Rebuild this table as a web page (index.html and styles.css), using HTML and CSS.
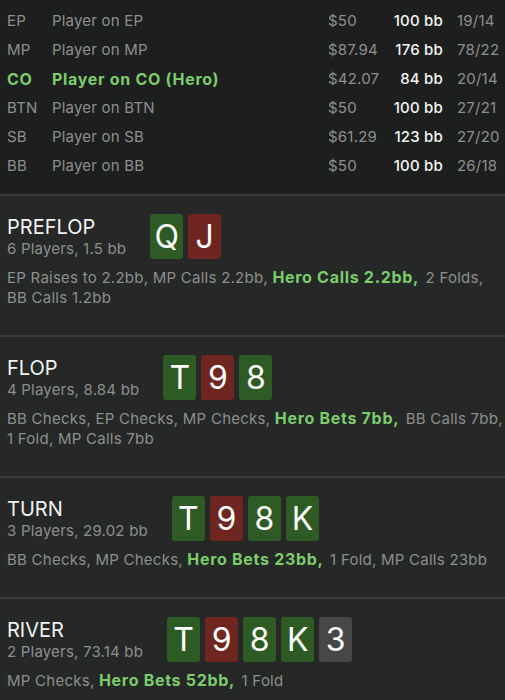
FILE: index.html
```html
<!DOCTYPE html>
<html>
<head>
<meta charset="utf-8">
<link rel="stylesheet" href="styles.css">
</head>
<body>
<div class="players">
  <div class="prow"><span class="pos">EP</span><span class="name">Player on EP</span><span class="money">$50</span><span class="bb">100 bb</span><span class="ratio">19/14</span></div>
  <div class="prow"><span class="pos">MP</span><span class="name">Player on MP</span><span class="money">$87.94</span><span class="bb">176 bb</span><span class="ratio">78/22</span></div>
  <div class="prow hero"><span class="pos">CO</span><span class="name">Player on CO (Hero)</span><span class="money">$42.07</span><span class="bb">84 bb</span><span class="ratio">20/14</span></div>
  <div class="prow"><span class="pos">BTN</span><span class="name">Player on BTN</span><span class="money">$50</span><span class="bb">100 bb</span><span class="ratio">27/21</span></div>
  <div class="prow"><span class="pos">SB</span><span class="name">Player on SB</span><span class="money">$61.29</span><span class="bb">123 bb</span><span class="ratio">27/20</span></div>
  <div class="prow"><span class="pos">BB</span><span class="name">Player on BB</span><span class="money">$50</span><span class="bb">100 bb</span><span class="ratio">26/18</span></div>
</div>

<section class="street">
  <div class="head">
    <div class="info"><div class="title">PREFLOP</div><div class="sub">6 Players, 1.5 bb</div></div>
    <div class="cards"><span class="card g">Q</span><span class="card r">J</span></div>
  </div>
  <p class="actions">EP Raises to 2.2bb, MP Calls 2.2bb, <b>Hero Calls 2.2bb,</b> 2 Folds, BB Calls 1.2bb</p>
</section>

<section class="street">
  <div class="head">
    <div class="info"><div class="title">FLOP</div><div class="sub">4 Players, 8.84 bb</div></div>
    <div class="cards"><span class="card g">T</span><span class="card r">9</span><span class="card g">8</span></div>
  </div>
  <p class="actions">BB Checks, EP Checks, MP Checks, <b>Hero Bets 7bb,</b> BB Calls 7bb, 1 Fold, MP Calls 7bb</p>
</section>

<section class="street">
  <div class="head">
    <div class="info"><div class="title">TURN</div><div class="sub">3 Players, 29.02 bb</div></div>
    <div class="cards"><span class="card g">T</span><span class="card r">9</span><span class="card g">8</span><span class="card g">K</span></div>
  </div>
  <p class="actions">BB Checks, MP Checks, <b>Hero Bets 23bb,</b> 1 Fold, MP Calls 23bb</p>
</section>

<section class="street">
  <div class="head">
    <div class="info"><div class="title">RIVER</div><div class="sub">2 Players, 73.14 bb</div></div>
    <div class="cards"><span class="card g">T</span><span class="card r">9</span><span class="card g">8</span><span class="card g">K</span><span class="card n">3</span></div>
  </div>
  <p class="actions">MP Checks, <b>Hero Bets 52bb,</b> 1 Fold</p>
</section>
</body>
</html>
```

FILE: styles.css
```css
* { box-sizing: border-box; }
html, body {
  margin: 0;
  padding: 0;
  background: #252826;
  font-family: Inter, "Noto Sans", "Liberation Sans", sans-serif;
  color: #8d8f8e;
}
.players {
  background: #1d1f1e;
  padding: 6px 0 14px 7px;
}
.prow {
  display: grid;
  grid-template-columns: 45px 276px 62px 53px 62px;
  height: 29px;
  align-items: center;
  font-size: 15px;
  letter-spacing: 0.2px;
  white-space: nowrap;
  color: #8d8f8e;
}
.prow .bb {
  text-align: right;
  color: #f4f4f4;
  font-weight: 500;
}
.prow .ratio { padding-left: 14px; }
.prow.hero .pos,
.prow.hero .name {
  color: #7ccc6c;
  font-weight: 700;
  font-size: 16px;
  letter-spacing: 0.7px;
}
.street {
  border-top: 2px solid #3a3d3b;
  padding: 18px 0 27px 7px;
}
.head {
  display: flex;
  align-items: center;
  gap: 24px;
}
.info { padding-top: 1px; }
.title {
  font-size: 20px;
  line-height: 24px;
  color: #f2f2f2;
}
.sub {
  font-size: 15px;
  line-height: 20px;
  letter-spacing: 0.2px;
  color: #8d8f8e;
}
.cards {
  display: flex;
  gap: 5px;
}
.card {
  width: 33px;
  height: 45px;
  border-radius: 3px;
  display: flex;
  align-items: center;
  justify-content: center;
  color: #ffffff;
  font-size: 32px;
}
.card.g { background: #2e5b24; }
.card.r { background: #6f2520; }
.card.n { background: #474747; }
.actions {
  margin: 9px 0 0 0;
  font-size: 15px;
  line-height: 20px;
  letter-spacing: 0.25px;
  color: #8d8f8e;
}
.actions b {
  color: #7ccc6c;
  font-weight: 700;
  font-size: 16px;
  line-height: 16px;
  letter-spacing: 0.7px;
  margin-right: 2px;
}
```
